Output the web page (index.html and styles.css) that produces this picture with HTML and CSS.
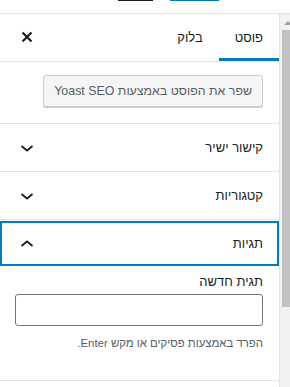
FILE: index.html
```html
<!DOCTYPE html>
<html lang="he" dir="rtl">
<head>
    <meta charset="UTF-8">
    <meta name="viewport" content="width=device-width, initial-scale=1.0">
    <title>Post settings</title>
    <link rel="stylesheet" href="styles.css">
</head>
<body>
    <div class="topbar">
        <span class="tb tb-dark"></span>
        <span class="tb tb-blue"></span>
    </div>

    <div class="main">
        <div class="sidebar">
            <div class="tabs">
                <button class="tab active">פוסט</button>
                <button class="tab">בלוק</button>
                <button class="close" aria-label="סגור">
                    <svg width="12" height="12" viewBox="0 0 12 12">
                        <path d="M1.5 1.5l9 9M10.5 1.5l-9 9" stroke="#191e23" stroke-width="2.2" fill="none"/>
                    </svg>
                </button>
            </div>

            <div class="panel yoast">
                <button class="yoast-btn">שפר את הפוסט באמצעות Yoast SEO</button>
            </div>

            <div class="panel">
                <button class="toggle">
                    <span>קישור ישיר</span>
                    <svg class="chev" width="24" height="24" viewBox="0 0 24 24">
                        <path d="M6.5 10l5.5 4.5 5.5-4.5" stroke="#191e23" stroke-width="1.8" fill="none"/>
                    </svg>
                </button>
            </div>

            <div class="panel">
                <button class="toggle">
                    <span>קטגוריות</span>
                    <svg class="chev" width="24" height="24" viewBox="0 0 24 24">
                        <path d="M6.5 10l5.5 4.5 5.5-4.5" stroke="#191e23" stroke-width="1.8" fill="none"/>
                    </svg>
                </button>
            </div>

            <div class="panel">
                <button class="toggle focused">
                    <span>תגיות</span>
                    <svg class="chev" width="24" height="24" viewBox="0 0 24 24">
                        <path d="M6.5 14l5.5-4.5 5.5 4.5" stroke="#191e23" stroke-width="1.8" fill="none"/>
                    </svg>
                </button>
                <div class="panel-body">
                    <label class="field-label" for="tag">תגית חדשה</label>
                    <input class="field" id="tag" type="text">
                    <p class="help">הפרד באמצעות פסיקים או מקש Enter.</p>
                </div>
            </div>

            <div class="panel"></div>
        </div>

        <div class="scrollbar">
            <span class="arrow"></span>
            <span class="thumb"></span>
        </div>
    </div>
</body>
</html>
```

FILE: styles.css
```css
body{
    margin: 0;
    background: #fff;
    font-family: "Liberation Sans", Arial, sans-serif;
    font-size: 13px;
    color: #191e23;
}
button{
    font-family: inherit;
    font-size: 13px;
    color: inherit;
    background: none;
    border: 0;
    margin: 0;
    padding: 0;
    cursor: pointer;
}

/* cut-off editor toolbar */
.topbar{
    height: 13px;
    border-bottom: 1px solid #e2e4e7;
    display: flex;
    direction: ltr;
    padding-left: 118px;
    gap: 17px;
}
.tb{
    display: block;
    height: 1px;
}
.tb-dark{
    width: 35px;
    background: #191e23;
}
.tb-blue{
    width: 49px;
    background: #007cba;
}

.main{
    display: flex;
    flex-direction: row-reverse;
    height: 373px;
    overflow: hidden;
}
.sidebar{
    width: 279px;
    border-right: 1px solid #e2e4e7;
    flex: none;
}

.tabs{
    display: flex;
    height: 47px;
    border-bottom: 1px solid #e2e4e7;
}
.tab{
    height: 47px;
    padding: 0 16px;
}
.tab.active{
    box-shadow: inset 0 -3px 0 #007cba;
}
.close{
    margin-right: auto;
    margin-left: 9px;
    margin-top: 5px;
    width: 36px;
    height: 36px;
    display: flex;
    align-items: center;
    justify-content: center;
}

.panel{
    border-top: 1px solid #e2e4e7;
}
.yoast{
    border-top: 0;
    padding: 13px 16px 16px;
}
.yoast-btn{
    height: 32px;
    padding: 0 10px;
    font-size: 12.4px;
    background: #f5f5f5;
    border: 1px solid #ccc;
    border-radius: 3px;
    box-shadow: 0 1px 0 #ccc;
    color: #555d66;
    box-sizing: border-box;
}

.toggle{
    width: 100%;
    height: 47px;
    display: flex;
    align-items: center;
    justify-content: space-between;
    padding: 0 16px 0 15px;
}
.toggle.focused{
    height: 45px;
    margin: 1px 0;
    box-shadow: inset 0 0 0 2px #007cba;
}
.chev{
    display: block;
}

.panel-body{
    padding: 6px 16px 28px 15px;
}
.field-label{
    display: block;
    line-height: 18px;
    margin-bottom: 3px;
}
.field{
    display: block;
    width: 100%;
    height: 32px;
    box-sizing: border-box;
    border: 1px solid #757575;
    border-radius: 3px;
    margin: 0;
}
.help{
    margin: 8px 0 0;
    line-height: 18px;
    font-size: 11.4px;
    color: #555d66;
}

.scrollbar{
    flex: 1;
    background: #f1f1f1;
    position: relative;
}
.arrow{
    position: absolute;
    top: 7px;
    left: 4px;
    border-left: 4px solid transparent;
    border-right: 4px solid transparent;
    border-bottom: 4px solid #a3a3a3;
}
.thumb{
    position: absolute;
    top: 16px;
    left: 2px;
    right: 0;
    height: 277px;
    background: #c1c1c1;
}
```
